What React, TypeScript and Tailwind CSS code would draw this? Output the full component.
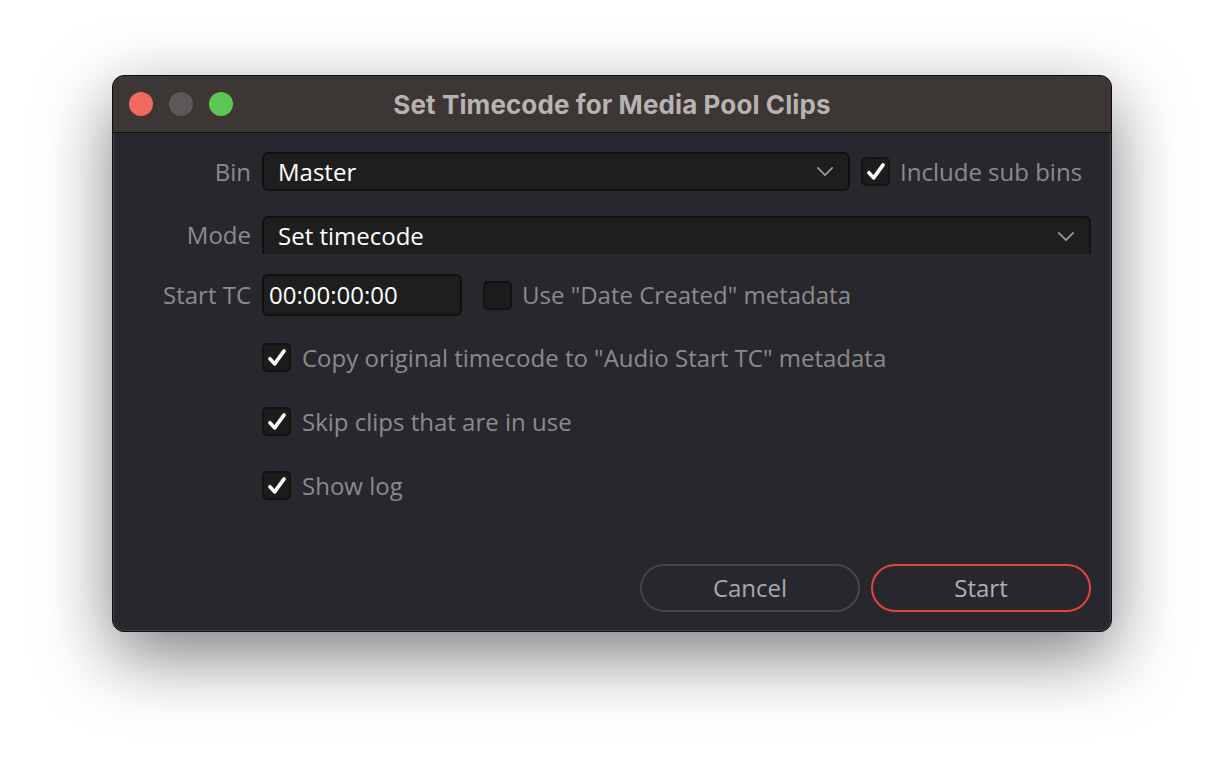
import React from 'react'

const Check = () => (
  <svg viewBox="0 0 28 28" className="w-[22px] h-[22px]">
    <path d="M5 15 L11 21.5 L23 5" fill="none" stroke="#ffffff" strokeWidth="4.6" strokeLinecap="round" strokeLinejoin="round" />
  </svg>
)

function Checkbox({ checked }: { checked: boolean }) {
  return (
    <div className="w-[29px] h-[29px] shrink-0 rounded-[5px] bg-[#1c1c1d] border-2 border-[#121213] flex items-center justify-center">
      {checked && <Check />}
    </div>
  )
}

const Chevron = () => (
  <svg viewBox="0 0 20 12" className="w-[18px] h-[11px]">
    <path d="M2 2 L10 10 L18 2" fill="none" stroke="#9a9a9a" strokeWidth="2" strokeLinecap="round" strokeLinejoin="round" />
  </svg>
)

const labelCls = 'w-[149px] shrink-0 text-right pr-[11px] text-[24px] text-[#8b8b8d]'

export default function App() {
  return (
    <div className="w-[1224px] h-[780px] bg-white flex justify-center pt-[75px]" style={{ fontFamily: '"Open Sans", "Noto Sans", sans-serif' }}>
      <div className="w-[1000px] h-[557px] rounded-[12px] overflow-hidden border border-[#0e0e0e] shadow-[0_24px_70px_rgba(0,0,0,0.5),inset_0_0_0_1px_rgba(255,255,255,0.12)] flex flex-col bg-[#28272d]">
        {/* title bar */}
        <div className="h-[57px] shrink-0 bg-[#3c3635] border-b border-[#0f0f10] relative flex items-center justify-center">
          <div className="absolute left-[16px] top-[16px] flex gap-[16px]">
            <div className="w-[24px] h-[24px] rounded-full bg-[#ee6a5e]" />
            <div className="w-[24px] h-[24px] rounded-full bg-[#5d5858]" />
            <div className="w-[24px] h-[24px] rounded-full bg-[#5ec553]" />
          </div>
          <div className="text-[26px] font-bold text-[#b8b2b1] tracking-[0.1px]" style={{ fontFamily: 'Inter, "Open Sans", sans-serif' }}>
            Set Timecode for Media Pool Clips
          </div>
        </div>

        {/* body */}
        <div className="flex-1 flex flex-col pt-[19px] pr-[20px]">
          <div className="flex items-center h-[39px]">
            <div className={labelCls}>Bin</div>
            <div className="w-[588px] h-[39px] rounded-[6px] bg-[#1e1e1f] border-2 border-[#111112] flex items-center justify-between pl-[14px] pr-[14px]">
              <span className="text-[24px] text-white">Master</span>
              <Chevron />
            </div>
            <div className="ml-[11px]">
              <Checkbox checked />
            </div>
            <span className="ml-[10px] text-[24px] text-[#8b8b8d]">Include sub bins</span>
          </div>

          <div className="flex items-center h-[38px] mt-[25px]">
            <div className={labelCls}>Mode</div>
            <div className="flex-1 h-[38px] rounded-t-[6px] bg-[#1e1e1f] border-2 border-b-0 border-[#111112] flex items-center justify-between pl-[14px] pr-[14px]">
              <span className="text-[24px] text-white">Set timecode</span>
              <Chevron />
            </div>
          </div>

          <div className="flex items-center h-[42px] mt-[20px]">
            <div className={labelCls}>Start TC</div>
            <div className="w-[200px] h-[42px] rounded-[6px] bg-[#1e1e1f] border-2 border-[#111112] flex items-center pl-[5px]">
              <span className="text-[24px] text-white">00:00:00:00</span>
            </div>
            <div className="ml-[21px]">
              <Checkbox checked={false} />
            </div>
            <span className="ml-[10px] text-[24px] text-[#8b8b8d]">Use "Date Created" metadata</span>
          </div>

          {[
            { text: 'Copy original timecode to "Audio Start TC" metadata', mt: 'mt-[27px]' },
            { text: 'Skip clips that are in use', mt: 'mt-[35px]' },
            { text: 'Show log', mt: 'mt-[35px]' },
          ].map((r) => (
            <div key={r.text} className={`flex items-center h-[29px] pl-[149px] ${r.mt}`}>
              <Checkbox checked />
              <span className="ml-[11px] text-[24px] text-[#8b8b8d]">{r.text}</span>
            </div>
          ))}

          <div className="flex justify-end gap-[11px] mt-[64px] pr-[0px]">
            <button className="w-[220px] h-[48px] rounded-full border-2 border-[#45454b] text-[24px] text-[#a9a9ab]">
              Cancel
            </button>
            <button className="w-[220px] h-[48px] rounded-full border-2 border-[#e2443c] text-[24px] text-[#b0b0b2]">
              Start
            </button>
          </div>
        </div>
      </div>
    </div>
  )
}
